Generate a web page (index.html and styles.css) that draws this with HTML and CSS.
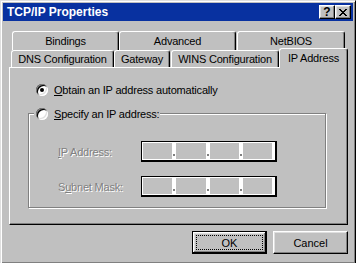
FILE: index.html
```html
<!DOCTYPE html>
<html>
	<head>
		<meta charset="utf-8" />
		<title>TCP/IP Properties</title>
		<link rel="stylesheet" href="styles.css">
	</head>
	<body>
		<div class="window">
			<div class="titlebar">
				<span class="title">TCP/IP Properties</span>
				<div class="title-buttons">
					<span class="tbtn help">?</span>
					<span class="tbtn close">
						<svg width="8" height="7" viewBox="0 0 8 7" shape-rendering="crispEdges">
							<path d="M0 0h2v1H0zM6 0h2v1H6zM1 1h2v1H1zM5 1h2v1H5zM2 2h4v1H2zM3 3h2v1H3zM2 4h4v1H2zM1 5h2v1H1zM5 5h2v1H5zM0 6h2v1H0zM6 6h2v1H6z" fill="#000" />
						</svg>
					</span>
				</div>
			</div>

			<div class="tab-row back">
				<div class="tab t-bindings">Bindings</div>
				<div class="tab t-advanced">Advanced</div>
				<div class="tab t-netbios">NetBIOS</div>
			</div>
			<div class="tab-row front">
				<div class="tab t-dns">DNS Configuration</div>
				<div class="tab t-gateway">Gateway</div>
				<div class="tab t-wins">WINS Configuration</div>
				<div class="tab t-ip active">IP Address</div>
			</div>

			<div class="panel">
				<div class="option first">
					<span class="radio checked"></span>
					<span><u>O</u>btain an IP address automatically</span>
				</div>

				<fieldset class="group">
					<legend>
						<span class="option">
							<span class="radio"></span>
							<span><u>S</u>pecify an IP address:</span>
						</span>
					</legend>
					<div class="ip-row">
						<span class="ip-label"><u>I</u>P Address:</span>
						<div class="ip-field">
							<span class="ip-cell"></span><span class="ip-dot"></span>
							<span class="ip-cell"></span><span class="ip-dot"></span>
							<span class="ip-cell"></span><span class="ip-dot"></span>
							<span class="ip-cell"></span>
						</div>
					</div>
					<div class="ip-row last">
						<span class="ip-label">S<u>u</u>bnet Mask:</span>
						<div class="ip-field">
							<span class="ip-cell"></span><span class="ip-dot"></span>
							<span class="ip-cell"></span><span class="ip-dot"></span>
							<span class="ip-cell"></span><span class="ip-dot"></span>
							<span class="ip-cell"></span>
						</div>
					</div>
				</fieldset>
			</div>

			<div class="actions">
				<button class="btn default"><span class="focus">OK</span></button>
				<button class="btn">Cancel</button>
			</div>
		</div>
	</body>
</html>
```

FILE: styles.css
```css
html,
body {
	margin: 0;
	overflow: hidden;
}

body {
	background-color: #c0c0c0;
	font-family: "Liberation Sans", Arial, sans-serif;
	font-size: 11px;
	letter-spacing: -0.2px;
	color: #000;
}

.window {
	box-sizing: border-box;
	width: 356px;
	height: 264px;
	padding: 2px;
	background-color: #c0c0c0;
	border: 1px solid;
	border-color: #dfdfdf #000 #000 #dfdfdf;
	box-shadow: inset 1px 1px #fff, inset -1px -1px #808080;
}

/* title bar */
.titlebar {
	display: flex;
	align-items: center;
	justify-content: space-between;
	height: 18px;
	padding: 0 2px 0 4px;
	background-color: #0831a0;
	color: #fff;
}

.title {
	font-size: 12px;
	font-weight: bold;
	letter-spacing: 0;
}

.title-buttons {
	display: flex;
}

.tbtn {
	box-sizing: border-box;
	display: flex;
	align-items: center;
	justify-content: center;
	width: 16px;
	height: 14px;
	background-color: #c0c0c0;
	color: #000;
	border: 1px solid;
	border-color: #fff #000 #000 #fff;
	box-shadow: inset -1px -1px #808080, inset 1px 1px #dfdfdf;
	font-size: 12px;
	font-weight: bold;
	line-height: 1;
	letter-spacing: 0;
}

/* tabs */
.tab-row {
	display: flex;
}

.tab-row.back {
	height: 19px;
	margin: 10px 0 0 9px;
}

.tab-row.front {
	height: 17px;
	margin-left: 8px;
	align-items: flex-end;
}

.tab {
	box-sizing: border-box;
	display: flex;
	align-items: center;
	justify-content: center;
	height: 100%;
	background-color: #c0c0c0;
	border: 1px solid;
	border-bottom: none;
	border-color: #fff #000 #000 #fff;
	border-radius: 3px 3px 0 0;
	box-shadow: inset -1px 0 #808080;
	white-space: nowrap;
}

.t-bindings { width: 107px; }
.t-advanced { width: 117px; }
.t-netbios { width: 108px; margin-left: 1px; }
.t-dns { width: 103px; }
.t-gateway { width: 56px; }
.t-wins { width: 108px; margin-left: 1px; }
.t-ip { width: 69px; }

.tab.active {
	position: relative;
	z-index: 1;
	height: 20px;
	margin-bottom: -1px;
	padding-bottom: 1px;
}

/* page */
.panel {
	box-sizing: border-box;
	width: 339px;
	height: 158px;
	margin-left: 6px;
	padding: 15px 0 0 18px;
	border: 1px solid;
	border-color: #fff #000 #000 #fff;
	box-shadow: inset -1px -1px #808080;
}

.option {
	display: flex;
	align-items: center;
	gap: 6px;
	height: 13px;
}

.option.first {
	margin-left: 8px;
}

.radio {
	flex: none;
	display: flex;
	align-items: center;
	justify-content: center;
	width: 12px;
	height: 12px;
	border-radius: 50%;
	background-color: #fff;
	box-shadow: inset 1px 1px #808080, inset -1px -1px #fff, inset 2px 2px #000, inset -2px -2px #dfdfdf;
}

.radio.checked::after {
	content: "";
	width: 4px;
	height: 4px;
	border-radius: 50%;
	background-color: #000;
}

.group {
	box-sizing: border-box;
	width: 298px;
	min-width: 0;
	margin: 11px 0 0 0;
	padding: 0;
	border: 1px solid #808080;
	box-shadow: inset 1px 1px #fff, 1px 1px #fff;
}

.group legend {
	margin-left: 5px;
	padding: 0 1px 0 2px;
	background-color: #c0c0c0;
}

.ip-row {
	display: flex;
	align-items: center;
	margin: 21px 0 0 29px;
}

.ip-row.last {
	margin-top: 14px;
	margin-bottom: 10px;
}

.ip-label {
	width: 83px;
	color: #808080;
	text-shadow: 1px 1px #fff;
}

.ip-field {
	box-sizing: border-box;
	display: flex;
	width: 136px;
	height: 21px;
	padding: 1px 3px 1px 1px;
	background-color: #fff;
	border-style: solid;
	border-color: #000;
	border-width: 1px 2px 2px 1px;
}

.ip-cell {
	flex: 1;
	background-color: #c0c0c0;
}

.ip-dot {
	box-sizing: border-box;
	display: flex;
	align-items: flex-end;
	justify-content: center;
	width: 4px;
	padding-bottom: 3px;
}

.ip-dot::after {
	content: "";
	width: 2px;
	height: 2px;
	background-color: #808080;
}

/* buttons */
.actions {
	display: flex;
	justify-content: flex-end;
	gap: 6px;
	margin-top: 6px;
	padding-right: 5px;
}

.btn {
	box-sizing: border-box;
	display: flex;
	align-items: center;
	justify-content: center;
	width: 75px;
	height: 23px;
	padding: 0;
	font: inherit;
	color: #000;
	background-color: #c0c0c0;
	border: 1px solid;
	border-color: #fff #000 #000 #fff;
	box-shadow: inset -1px -1px #808080, inset 1px 1px #dfdfdf;
}

.btn.default {
	padding: 3px;
	border-color: #000;
	box-shadow: inset -1px -1px #000, inset 1px 1px #fff, inset -2px -2px #808080, inset 2px 2px #dfdfdf;
}

.focus {
	flex: 1;
	align-self: stretch;
	display: flex;
	align-items: center;
	justify-content: center;
	border: 1px dotted #000;
}
```
